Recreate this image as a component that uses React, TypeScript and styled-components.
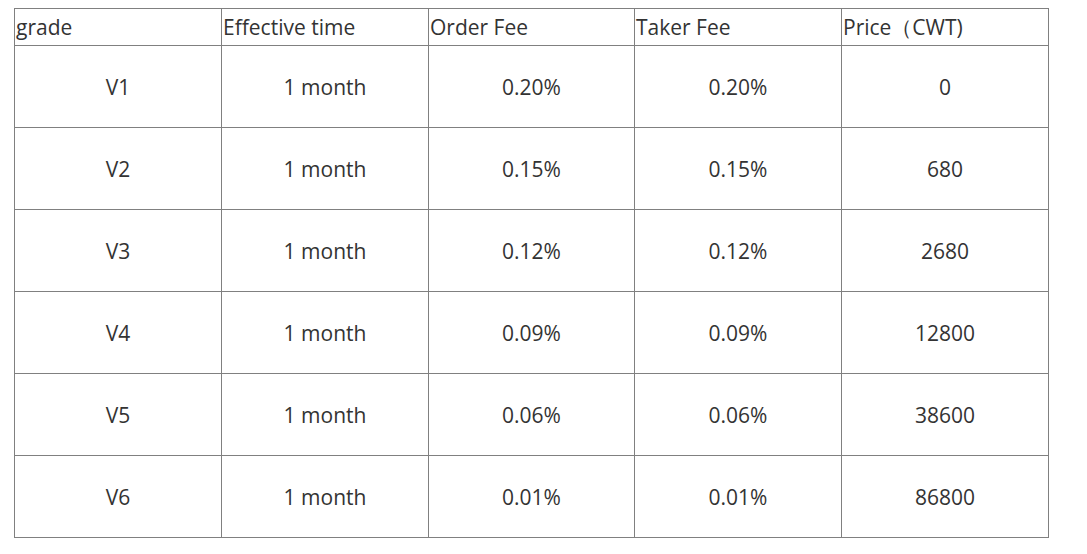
import React from "react";
import styled, { createGlobalStyle } from "styled-components";

const Global = createGlobalStyle`
  html, body { margin: 0; padding: 0; background: #fff; }
  body { font-family: "Open Sans", "Noto Sans", sans-serif; color: #333; }
`;

const Page = styled.div`
  padding: 8px 0 0 14px;
`;

const Table = styled.table`
  border-collapse: collapse;
  table-layout: fixed;
  width: 1034px;
  font-size: 21px;
  line-height: 1.3;
`;

const Col = styled.col<{ $w: number }>`
  width: ${(p) => p.$w}px;
`;

const Head = styled.th`
  border: 1px solid #808080;
  height: 35px;
  padding: 1px 0 0 1px;
  text-align: left;
  font-weight: 400;
  white-space: nowrap;
  vertical-align: middle;
`;

const Cell = styled.td`
  border: 1px solid #808080;
  height: 79px;
  padding: 2px 0 0 0;
  text-align: center;
  vertical-align: middle;
`;

const headers = ["grade", "Effective time", "Order Fee", "Taker Fee", "Price（CWT)"];
const rows = [
  ["V1", "1 month", "0.20%", "0.20%", "0"],
  ["V2", "1 month", "0.15%", "0.15%", "680"],
  ["V3", "1 month", "0.12%", "0.12%", "2680"],
  ["V4", "1 month", "0.09%", "0.09%", "12800"],
  ["V5", "1 month", "0.06%", "0.06%", "38600"],
  ["V6", "1 month", "0.01%", "0.01%", "86800"],
];
const widths = [207, 207, 206, 207, 207];

export default function App() {
  return (
    <Page>
      <Global />
      <Table>
        <colgroup>
          {widths.map((w, i) => (
            <Col key={i} $w={w} />
          ))}
        </colgroup>
        <thead>
          <tr>
            {headers.map((h) => (
              <Head key={h}>{h}</Head>
            ))}
          </tr>
        </thead>
        <tbody>
          {rows.map((r) => (
            <tr key={r[0]}>
              {r.map((c, i) => (
                <Cell key={i}>{c}</Cell>
              ))}
            </tr>
          ))}
        </tbody>
      </Table>
    </Page>
  );
}
